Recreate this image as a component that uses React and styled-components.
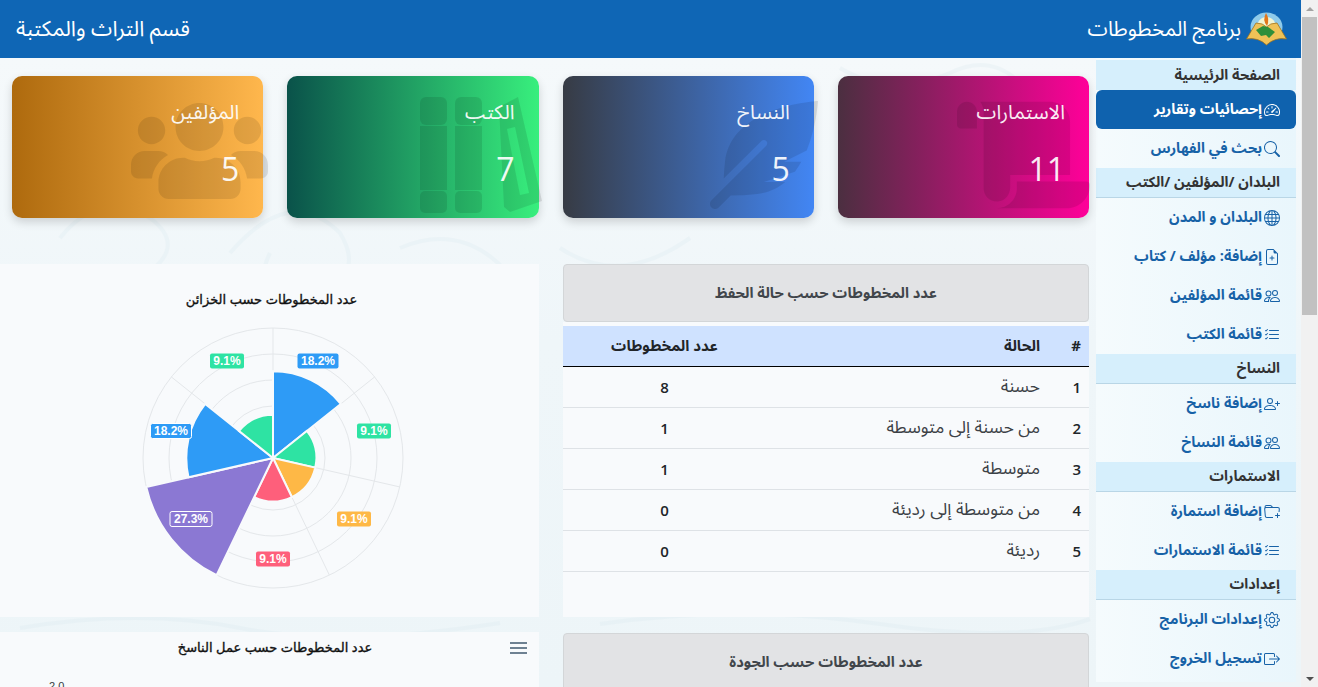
import React from 'react'
import styled, { createGlobalStyle } from 'styled-components'
import {
    BsSpeedometer2, BsSearch, BsGlobe, BsFileEarmarkPlus, BsPeople, BsListCheck,
    BsPersonPlus, BsFolderPlus, BsGear, BsBoxArrowRight
} from 'react-icons/bs'
import { FaUsers, FaFeatherAlt, FaScroll } from 'react-icons/fa'

const ARABIC = `"Noto Sans Arabic", "DejaVu Sans", "Noto Sans", sans-serif`;

const GlobalStyle = createGlobalStyle`
    html, body {
        margin: 0;
        padding: 0;
        height: 100%;
        overflow: hidden;
    }
    * {
        box-sizing: border-box;
    }
`;

const Frame = styled.div`
    display: flex;
    height: 687px;
    overflow: hidden;
    font-family: ${ARABIC};
`;

const Page = styled.div`
    flex: 1;
    display: flex;
    flex-direction: column;
    min-width: 0;
`;

const ScrollTrack = styled.div`
    width: 17px;
    display: flex;
    flex-direction: column;
    align-items: center;
    background: #f1f1f1;
`;

const ScrollArrow = styled.div`
    width: 17px;
    height: 17px;
    flex: none;
    display: flex;
    align-items: center;
    justify-content: center;

    &::before {
        content: '';
        border-left: 4px solid transparent;
        border-right: 4px solid transparent;
        border-${p => (p.$down ? 'top' : 'bottom')}: 4px solid ${p => (p.$down ? '#505050' : '#a3a3a3')};
    }
`;

const ScrollThumb = styled.div`
    width: 15px;
    height: 298px;
    flex: none;
    background: #c1c1c1;
`;

const ScrollSpace = styled.div`
    flex: 1;
`;

const Header = styled.header`
    height: 58px;
    flex: none;
    display: flex;
    align-items: center;
    justify-content: space-between;
    padding: 0 14px 0 16px;
    background: #0f66b5;
    color: #fff;
    direction: rtl;
`;

const Brand = styled.div`
    display: flex;
    align-items: center;
    gap: 5px;
    font-size: 20.5px;
`;

const Department = styled.div`
    font-size: 21.5px;
`;

const Body = styled.div`
    position: relative;
    flex: 1;
    display: flex;
    min-height: 0;
    padding-right: 5px;
    direction: rtl;
    background: linear-gradient(180deg, #f5f9fb 0%, #eff6f9 45%, #edf5f8 100%);
`;

const Swirls = styled.svg`
    position: absolute;
    inset: 0;
    width: 100%;
    height: 100%;
    fill: none;
    stroke: #d9e9ef;
    stroke-width: 4;
    opacity: 0.25;
`;

const Sidebar = styled.nav`
    position: relative;
    width: 200px;
    height: 624px;
    flex: none;
    padding-top: 2px;
    background: linear-gradient(to right, #f5fbfd, #e9f6fc);
`;

const Section = styled.div`
    height: 30px;
    display: flex;
    align-items: center;
    padding-right: 16px;
    background: #d6effc;
    border-bottom: 1px solid #b9d6e6;
    color: #333;
    font-size: 14.5px;
    font-weight: 700;
    ${p => p.$first && 'border-bottom: 0;'}
`;

const MenuItem = styled.a`
    height: 39px;
    display: flex;
    align-items: center;
    gap: 2px;
    padding-right: 16px;
    border-radius: 6px;
    color: ${p => (p.$active ? '#fff' : '#1762a7')};
    background: ${p => (p.$active ? '#0f62ae' : 'transparent')};
    font-size: 14.5px;
    font-weight: 700;

    svg {
        width: 16px;
        height: 16px;
        flex: none;
    }
`;

const Main = styled.main`
    position: relative;
    flex: 1;
    min-width: 0;
    padding: 18px 7px 0 0;
`;

const Cards = styled.div`
    display: grid;
    grid-template-columns: repeat(4, 1fr);
    gap: 24px;
    margin-left: 12px;
`;

const Card = styled.div`
    position: relative;
    height: 142px;
    padding: 24px;
    border-radius: 10px;
    color: #fff;
    background: linear-gradient(to right, ${p => p.$from}, ${p => p.$to});
    box-shadow: 0 4px 10px rgba(0, 0, 0, 0.16);
`;

const CardTitle = styled.div`
    position: relative;
    z-index: 1;
    height: 26px;
    font-size: 20px;
    line-height: 26px;
    opacity: 0.92;
`;

const CardValue = styled.div`
    position: relative;
    z-index: 1;
    margin-top: 19px;
    font-family: "Open Sans", sans-serif;
    font-size: 32px;
    line-height: 48px;
    opacity: 0.92;
`;

const CardWatermark = styled.div`
    position: absolute;
    top: ${p => p.$top}px;
    right: ${p => p.$right}px;
    width: ${p => p.$width}px;
    height: ${p => p.$height}px;
    color: rgba(0, 0, 0, 0.1);

    svg {
        display: block;
        width: 100%;
        height: 100%;
    }
`;

const Columns = styled.div`
    display: grid;
    grid-template-columns: 526px 1fr;
    column-gap: 24px;
    margin-top: 46px;
`;

const Column = styled.div`
    display: flex;
    flex-direction: column;
    min-width: 0;
`;

const Notice = styled.div`
    height: 58px;
    flex: none;
    display: flex;
    align-items: center;
    justify-content: center;
    background: #e2e3e5;
    border: 1px solid #d3d6d8;
    border-radius: 4px;
    color: #41464b;
    font-size: 14.7px;
    font-weight: 700;
`;

const TablePanel = styled.div`
    height: 295px;
    flex: none;
    padding-top: 4px;
    margin-bottom: 16px;
    background: #f8fafc;
`;

const Table = styled.table`
    width: 100%;
    border-collapse: collapse;
    table-layout: fixed;
    color: #212529;
`;

const HeadCell = styled.th`
    height: 40px;
    padding: 0 8px ${p => (p.$count ? '0 46px' : '0 0')};
    background: #cfe2ff;
    border-bottom: 1px solid #000;
    text-align: ${p => (p.$count ? 'center' : 'right')};
    font-size: 15px;
    font-weight: 700;
`;

const Cell = styled.td`
    height: 41px;
    padding: 0 8px ${p => (p.$count ? '0 46px' : '0 0')};
    border-bottom: 1px solid #dee2e6;
    text-align: ${p => (p.$count ? 'center' : 'right')};
    font-family: ${p => (p.$num ? '"Open Sans", sans-serif' : 'inherit')};
    font-weight: ${p => (p.$num ? 600 : 400)};
    font-size: ${p => (p.$num ? '15px' : '17.3px')};
    color: ${p => (p.$num ? '#212529' : '#3c4146')};
`;

const ChartPanel = styled.section`
    position: relative;
    height: ${p => p.$height}px;
    flex: none;
    margin-bottom: ${p => p.$gap || 0}px;
    background: #f8fafc;
    overflow: hidden;
`;

const ChartTitle = styled.h3`
    position: relative;
    z-index: 1;
    margin: 0;
    padding-top: ${p => p.$top}px;
    padding-left: ${p => p.$shift}px;
    font-family: "Liberation Sans", "DejaVu Sans", sans-serif;
    font-size: 13px;
    font-weight: 400;
    -webkit-text-stroke: 0.35px #111;
    line-height: 20px;
    text-align: center;
    color: #111;
`;

const ChartMenu = styled.div`
    position: absolute;
    top: 10px;
    left: 510px;
    width: 17px;
    height: 12px;
    border-top: 2px solid #6e8192;
    border-bottom: 2px solid #6e8192;

    &::after {
        content: '';
        display: block;
        height: 2px;
        margin-top: 3px;
        background: #6e8192;
    }
`;

const AxisTick = styled.span`
    position: absolute;
    top: 48px;
    left: 49px;
    font-family: "Liberation Sans", sans-serif;
    font-size: 11px;
    color: #373d3f;
`;

const PolarHolder = styled.div`
    position: absolute;
    inset: 0;

    svg {
        display: block;
    }
`;

const menu = [
    { section: 'الصفحة الرئيسية', first: true },
    { label: 'إحصائيات وتقارير', icon: BsSpeedometer2, active: true },
    { label: 'بحث في الفهارس', icon: BsSearch },
    { section: 'البلدان /المؤلفين /الكتب' },
    { label: 'البلدان و المدن', icon: BsGlobe },
    { label: 'إضافة: مؤلف / كتاب', icon: BsFileEarmarkPlus },
    { label: 'قائمة المؤلفين', icon: BsPeople },
    { label: 'قائمة الكتب', icon: BsListCheck },
    { section: 'النساخ' },
    { label: 'إضافة ناسخ', icon: BsPersonPlus },
    { label: 'قائمة النساخ', icon: BsPeople },
    { section: 'الاستمارات' },
    { label: 'إضافة استمارة', icon: BsFolderPlus },
    { label: 'قائمة الاستمارات', icon: BsListCheck },
    { section: 'إعدادات' },
    { label: 'إعدادات البرنامج', icon: BsGear },
    { label: 'تسجيل الخروج', icon: BsBoxArrowRight },
]

const rows = [
    ['1', 'حسنة', '8'],
    ['2', 'من حسنة إلى متوسطة', '1'],
    ['3', 'متوسطة', '1'],
    ['4', 'من متوسطة إلى رديئة', '0'],
    ['5', 'رديئة', '0'],
]

const Logo = () => (
    <svg width="41" height="34" viewBox="0 0 41 34">
        <ellipse cx="20.5" cy="15" rx="16" ry="14.5" fill="#8fcbea" />
        <ellipse cx="20.5" cy="16" rx="10" ry="11" fill="#f2f4d2" />
        <path d="M0.5 27 L10 11 Q17 11 20.5 15 Q24 11 31 11 L40.5 27 Q29 25 20.5 33 Q12 25 0.5 27Z" fill="#efc257" stroke="#9f7420" strokeWidth="0.8" />
        <path d="M10 18 L17 14 L22 15 L29 20 L23 26 L20 23 L15 24Z" fill="#2f8f3a" />
        <path d="M20 1 Q24 7 21 14 Q16 8 20 1Z" fill="#e2761b" />
    </svg>
)

const BooksMark = () => (
    <svg viewBox="0 0 122 116" fill="currentColor">
        <rect x="0" y="0" width="27" height="28" rx="6" />
        <rect x="0" y="29" width="27" height="64" />
        <rect x="0" y="94" width="27" height="22" rx="5" />
        <rect x="35" y="0" width="27" height="28" rx="6" />
        <rect x="35" y="29" width="27" height="64" />
        <rect x="35" y="94" width="27" height="22" rx="5" />
        <path d="M79 10 L98 0 L122 104 L90 115 L84 110Z M87 32 L100 98 L109 96 L95 30Z" fillRule="evenodd" />
    </svg>
)

const polar = (r, deg) => {
    const a = ((deg - 90) * Math.PI) / 180
    return [r * Math.cos(a), r * Math.sin(a)]
}

const slices = [
    { value: 2, color: '#2e9bf6' },
    { value: 1, color: '#2ee3a3' },
    { value: 1, color: '#feb846' },
    { value: 1, color: '#fe5f7b' },
    { value: 3, color: '#8b78d3' },
    { value: 2, color: '#2e9bf6' },
    { value: 1, color: '#2ee3a3' },
]

const labels = [
    { text: '18.2%', x: 318, y: 361, w: 41, color: '#2e9bf6' },
    { text: '9.1%', x: 374, y: 431, w: 34, color: '#2ee3a3' },
    { text: '9.1%', x: 354, y: 519, w: 34, color: '#feb846' },
    { text: '9.1%', x: 273, y: 559, w: 34, color: '#fe5f7b' },
    { text: '27.3%', x: 191, y: 519, w: 42, color: '#8b78d3', outlined: true },
    { text: '18.2%', x: 171, y: 431, w: 41, color: '#2e9bf6', outlined: true },
    { text: '9.1%', x: 227, y: 361, w: 34, color: '#2ee3a3' },
]

const STEP = 360 / 7

const PolarChart = () => {
    const cx = 273
    const cy = 458
    const top = 264
    return (
        <svg width="539" height="353" viewBox={`0 ${top} 539 353`}>
            {[26, 52, 78, 104, 130].map(r => (
                <circle key={r} cx={cx} cy={cy} r={r} fill="none" stroke="#e4e7ea" strokeWidth="1" />
            ))}
            {slices.map((s, i) => {
                const [x, y] = polar(130, i * STEP)
                return <line key={i} x1={cx} y1={cy} x2={cx + x} y2={cy + y} stroke="#e4e7ea" />
            })}
            {slices.map((s, i) => {
                const r = (s.value * 130) / 3
                const [x1, y1] = polar(r, i * STEP)
                const [x2, y2] = polar(r, (i + 1) * STEP)
                return (
                    <path
                        key={i}
                        d={`M${cx} ${cy} L${cx + x1} ${cy + y1} A${r} ${r} 0 0 1 ${cx + x2} ${cy + y2}Z`}
                        fill={s.color}
                        stroke="#f8fafc"
                        strokeWidth="2"
                    />
                )
            })}
            {labels.map(l => (
                <g key={l.text + l.x}>
                    <rect
                        x={l.x - l.w / 2}
                        y={l.y - 7.5}
                        width={l.w}
                        height="15"
                        rx="2"
                        fill={l.color}
                        stroke={l.outlined ? '#fff' : 'none'}
                    />
                    <text
                        x={l.x}
                        y={l.y + 4}
                        textAnchor="middle"
                        fill="#fff"
                        fontFamily="Liberation Sans, sans-serif"
                        fontWeight="700"
                        fontSize="12"
                    >
                        {l.text}
                    </text>
                </g>
            ))}
        </svg>
    )
}

const App = () => {
    return (
        <Frame>
            <GlobalStyle />
            <Page>
                <Header>
                    <Brand>
                        <Logo />
                        <span>برنامج المخطوطات</span>
                    </Brand>
                    <Department>قسم التراث والمكتبة</Department>
                </Header>
                <Body>
                    <Swirls viewBox="0 0 1301 629" preserveAspectRatio="none">
                        <path d="M60 180 q40 -50 90 -20 q40 30 -10 60" />
                        <path d="M230 195 q60 -70 110 -20 q30 50 -40 60 q-50 0 -30 -40" />
                        <path d="M400 190 q70 -30 120 40" />
                        <path d="M560 190 q60 40 130 -10" />
                        <path d="M840 10 q50 30 110 5 q40 -20 70 10" />
                        <path d="M20 570 q120 -20 220 0 t260 -5" />
                        <path d="M600 566 q140 -20 280 0 t210 -5" />
                    </Swirls>
                    <Sidebar>
                        {menu.map(item =>
                            item.section ? (
                                <Section key={item.section} $first={item.first}>{item.section}</Section>
                            ) : (
                                <MenuItem key={item.label} $active={item.active}>
                                    <item.icon />
                                    {item.label}
                                </MenuItem>
                            )
                        )}
                    </Sidebar>
                    <Main>
                        <Cards>
                            <Card $from="#4b2f40" $to="#ff0099">
                                <CardWatermark $top={21} $right={-1} $width={133} $height={116}><FaScroll /></CardWatermark>
                                <CardTitle>الاستمارات</CardTitle>
                                <CardValue>11</CardValue>
                            </Card>
                            <Card $from="#373b44" $to="#4286f4">
                                <CardWatermark $top={21} $right={-4} $width={108} $height={116}><FaFeatherAlt /></CardWatermark>
                                <CardTitle>النساخ</CardTitle>
                                <CardValue>5</CardValue>
                            </Card>
                            <Card $from="#0a524a" $to="#38ef7d">
                                <CardWatermark $top={21} $right={-3} $width={122} $height={116}><BooksMark /></CardWatermark>
                                <CardTitle>الكتب</CardTitle>
                                <CardValue>7</CardValue>
                            </Card>
                            <Card $from="#ae6a0e" $to="#ffb74d">
                                <CardWatermark $top={20} $right={-5} $width={137} $height={110}><FaUsers /></CardWatermark>
                                <CardTitle>المؤلفين</CardTitle>
                                <CardValue>5</CardValue>
                            </Card>
                        </Cards>
                        <Columns>
                            <Column>
                                <Notice>عدد المخطوطات حسب حالة الحفظ</Notice>
                                <TablePanel>
                                    <Table>
                                        <colgroup>
                                            <col width="41" />
                                            <col />
                                            <col width="165" />
                                        </colgroup>
                                        <thead>
                                            <tr>
                                                <HeadCell>#</HeadCell>
                                                <HeadCell>الحالة</HeadCell>
                                                <HeadCell $count>عدد المخطوطات</HeadCell>
                                            </tr>
                                        </thead>
                                        <tbody>
                                            {rows.map(r => (
                                                <tr key={r[0]}>
                                                    <Cell $num>{r[0]}</Cell>
                                                    <Cell>{r[1]}</Cell>
                                                    <Cell $count $num>{r[2]}</Cell>
                                                </tr>
                                            ))}
                                        </tbody>
                                    </Table>
                                </TablePanel>
                                <Notice>عدد المخطوطات حسب الجودة</Notice>
                            </Column>
                            <Column>
                                <ChartPanel $height={353} $gap={15}>
                                    <ChartTitle $top={26} $shift={4}>عدد المخطوطات حسب الخزائن</ChartTitle>
                                    <PolarHolder><PolarChart /></PolarHolder>
                                </ChartPanel>
                                <ChartPanel $height={60}>
                                    <ChartTitle $top={6} $shift={11}>عدد المخطوطات حسب عمل الناسخ</ChartTitle>
                                    <ChartMenu />
                                    <AxisTick>2.0</AxisTick>
                                </ChartPanel>
                            </Column>
                        </Columns>
                    </Main>
                </Body>
            </Page>
            <ScrollTrack>
                <ScrollArrow />
                <ScrollThumb />
                <ScrollSpace />
                <ScrollArrow $down />
            </ScrollTrack>
        </Frame>
    );
};

export default App;
